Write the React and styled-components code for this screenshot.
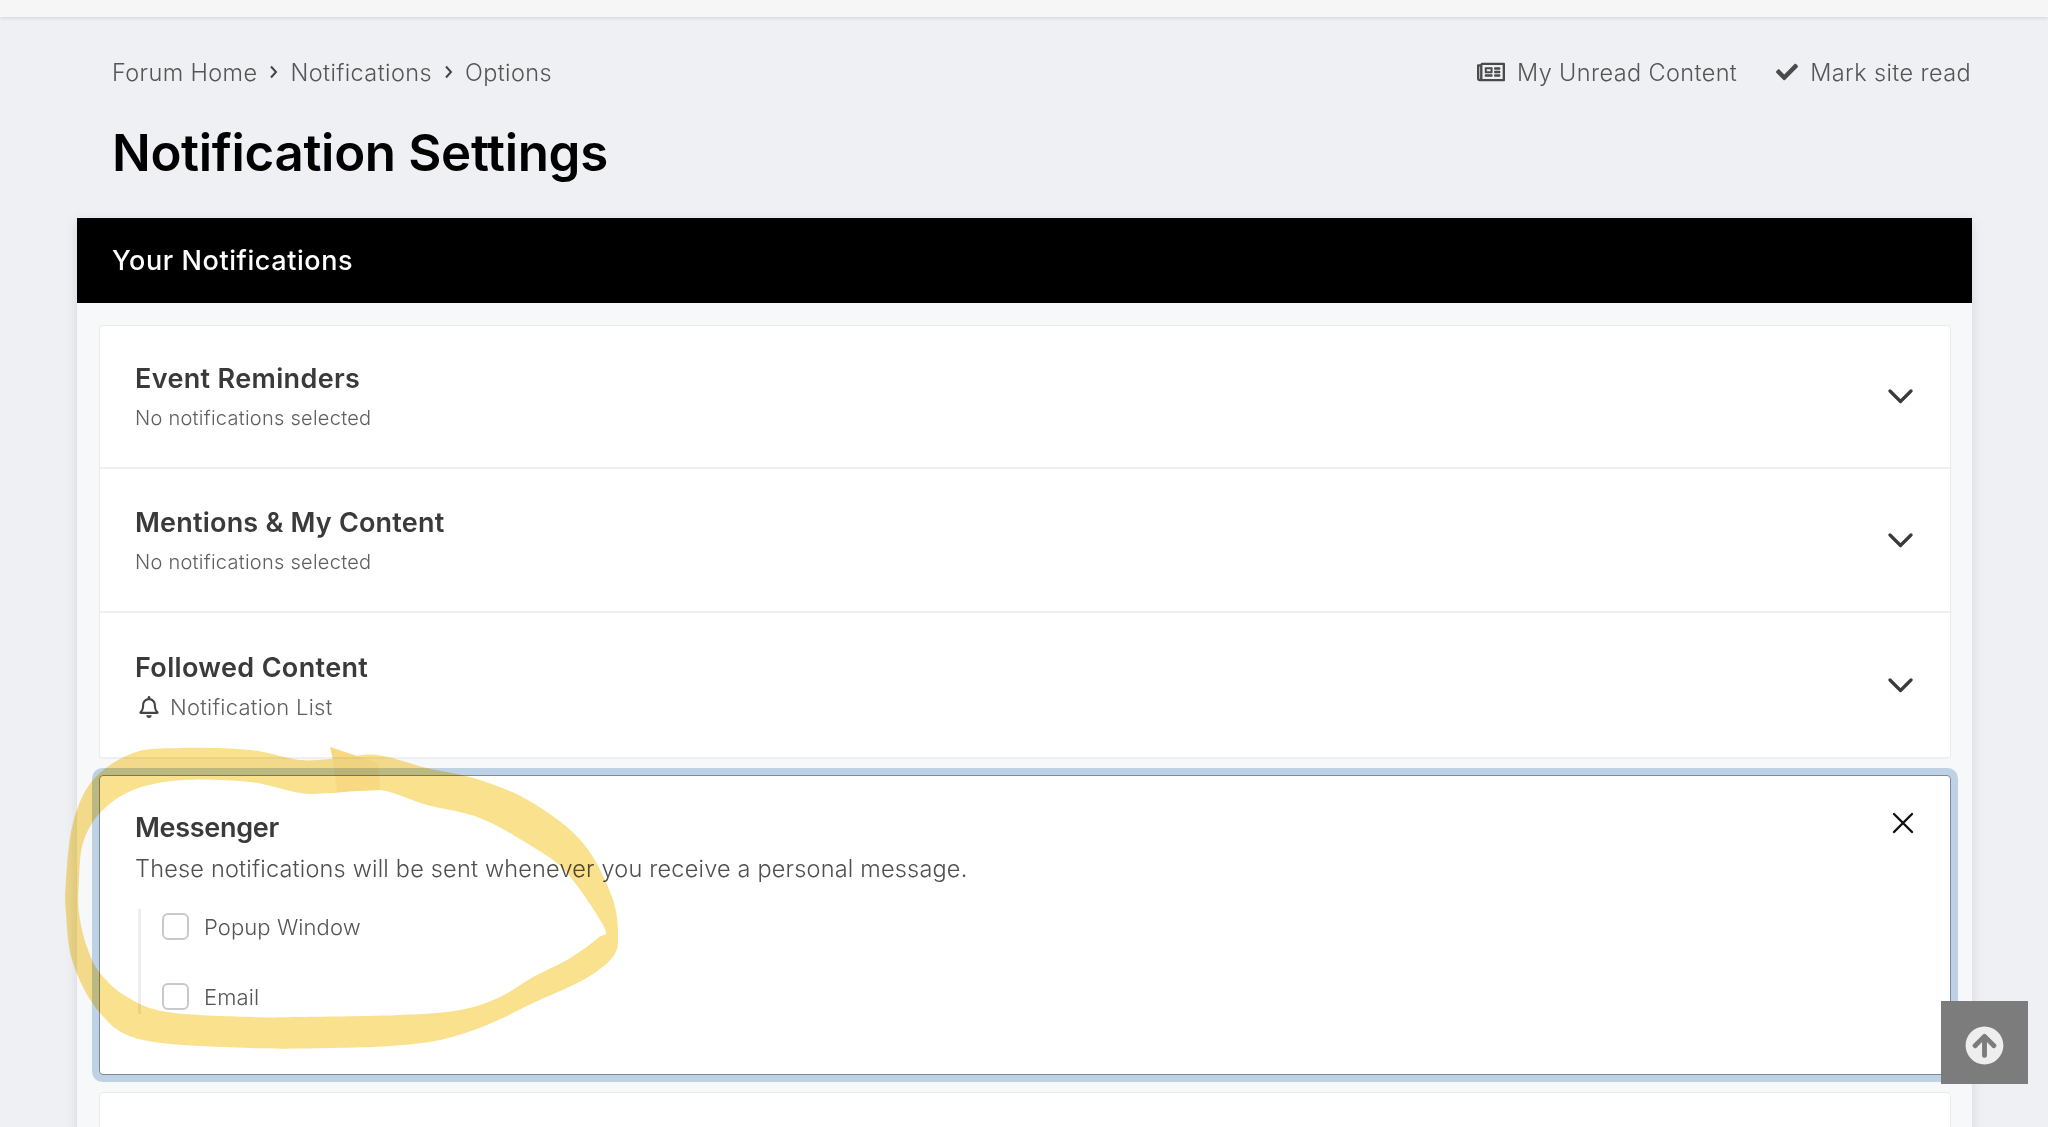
import React from "react";
import styled, { createGlobalStyle } from "styled-components";
import { FaRegNewspaper, FaCheck, FaRegBell, FaArrowCircleUp } from "react-icons/fa";

const Global = createGlobalStyle`
  html, body { margin: 0; padding: 0; background: #eff0f4; }
  #root { height: 1127px; overflow: hidden; position: relative; }
  * { box-sizing: border-box; }
  body { font-family: Inter, "Open Sans", sans-serif; color: #4a4a4a; }
`;

const Page = styled.div`
  height: 1127px;
  overflow: hidden;
  background: #eff0f4;
`;
const TopBar = styled.div`
  height: 17px;
  background: #f6f6f6;
  box-shadow: 0 1px 4px rgba(0, 0, 0, 0.12);
`;
const Crumbs = styled.div`
  display: flex;
  justify-content: space-between;
  align-items: center;
  height: 30px;
  margin-top: 40px;
  padding: 0 77px 0 112px;
  font-size: 23.5px;
  font-weight: 300;
  letter-spacing: 0.38px;
  color: #555;
`;
const Trail = styled.nav`
  display: flex;
  align-items: center;
  gap: 12px;
`;
const Sep = styled.svg`
  width: 9px;
  height: 14px;
  fill: none;
  stroke: #444;
  stroke-width: 2;
`;
const Actions = styled.div`
  display: flex;
  align-items: center;
  gap: 39px;
`;
const Action = styled.span`
  display: flex;
  align-items: center;
  gap: 12px;
  svg { font-size: ${(p) => p.$icon || 24}px; color: #4a4a4a; }
`;
const Title = styled.h1`
  margin: 36px 0 0 112px;
  font-size: 51px;
  line-height: 60px;
  font-weight: 600;
  color: #000;
  letter-spacing: -0.33px;
`;
const Panel = styled.section`
  margin: 35px 0 0 77px;
  width: 1895px;
  background: #f7f8fa;
  box-shadow: 0 3px 12px rgba(0, 0, 0, 0.1);
  padding-bottom: 40px;
`;
const PanelHead = styled.h2`
  margin: 0;
  height: 85px;
  padding-left: 35px;
  display: flex;
  align-items: center;
  background: #000;
  color: #fff;
  font-size: 27px;
  font-weight: 500;
  letter-spacing: 0.58px;
`;
const Cards = styled.div`
  padding: 22px 21px 0 22px;
`;
const Card = styled.article`
  display: flex;
  justify-content: space-between;
  align-items: center;
  height: ${(p) => p.$h}px;
  padding: 0 37px ${(p) => (p.$first ? 1 : 0)}px 35px;
  background: #fff;
  border: 1px solid #e9eaee;
  border-bottom: 2px solid #eeeff2;
  border-top-width: ${(p) => (p.$first ? 1 : 0)}px;
  border-radius: ${(p) => (p.$first ? "4px 4px 0 0" : p.$last ? "0 0 4px 4px" : "0")};
`;
const CardTitle = styled.h3`
  margin: 0;
  font-size: 27px;
  line-height: 36px;
  font-weight: 600;
  letter-spacing: ${(p) => p.$ls ?? 0.35}px;
  color: #3a3a3a;
`;
const CardSub = styled.div`
  display: flex;
  align-items: center;
  gap: 10px;
  margin-top: 7px;
  font-size: ${(p) => p.$size || 20}px;
  line-height: 28px;
  font-weight: 300;
  letter-spacing: 0.26px;
  color: #5f5f5f;
  svg { font-size: 22px; margin-left: 3px; color: #444; }
`;
const Chevron = styled.svg`
  width: 25px;
  height: 15px;
  fill: none;
  stroke: #3a3a3a;
  stroke-width: 3.2;
  stroke-linecap: round;
  stroke-linejoin: round;
`;
const Open = styled.article`
  display: flex;
  justify-content: space-between;
  align-items: flex-start;
  height: 300px;
  margin-top: 16px;
  padding: 34px 36px 0 35px;
  background: #fff;
  border: 1px solid #7b8a99;
  border-radius: 4px;
  box-shadow: 0 0 0 7px #bfd2e5;
`;
const Desc = styled.p`
  margin: 8px 0 0;
  font-size: 23.5px;
  line-height: 30px;
  font-weight: 300;
  letter-spacing: 0.19px;
  color: #4f4f4f;
`;
const Options = styled.ul`
  list-style: none;
  margin: 25px 0 0 3px;
  padding: 4px 0 4px 21px;
  display: flex;
  flex-direction: column;
  gap: 43px;
  border-left: 3px solid #eeeeee;
`;
const Option = styled.li`
  display: flex;
  align-items: center;
  gap: 15px;
  height: 27px;
  font-size: 22px;
  font-weight: 300;
  letter-spacing: 0.1px;
  color: #555;
`;
const Box = styled.span`
  width: 27px;
  height: 27px;
  border: 2px solid #c9c9c9;
  border-radius: 6px;
  background: #fff;
`;
const Close = styled.svg`
  width: 22px;
  height: 22px;
  margin-top: 2px;
  fill: none;
  stroke: #111;
  stroke-width: 2.4;
  stroke-linecap: round;
`;
const Next = styled.div`
  height: 200px;
  margin-top: 17px;
  background: #fff;
  border: 1px solid #e9eaee;
  border-radius: 4px;
`;
const TopButton = styled.button`
  position: absolute;
  left: 1941px;
  top: 1001px;
  width: 87px;
  height: 83px;
  border: 0;
  padding: 6px 0 0;
  background: #7c7c7c;
  color: #eeeeee;
  display: flex;
  align-items: center;
  justify-content: center;
  svg { font-size: 39px; }
`;
const Marker = styled.svg`
  position: absolute;
  left: 0;
  top: 0;
  width: 2048px;
  height: 1127px;
  pointer-events: none;
  mix-blend-mode: multiply;
  filter: blur(0.7px);
`;

const smooth = (pts) => {
  const n = pts.length;
  let d = `M${pts[0][0]} ${pts[0][1]}`;
  for (let i = 0; i < n; i++) {
    const p0 = pts[(i - 1 + n) % n], p1 = pts[i], p2 = pts[(i + 1) % n], p3 = pts[(i + 2) % n];
    d += `C${p1[0] + (p2[0] - p0[0]) / 6} ${p1[1] + (p2[1] - p0[1]) / 6} ${p2[0] - (p3[0] - p1[0]) / 6} ${p2[1] - (p3[1] - p1[1]) / 6} ${p2[0]} ${p2[1]}`;
  }
  return d + "Z";
};
const outer = [[66,913],[73,963],[100,1013],[143,1040],[250,1048],[330,1048],[390,1046],[440,1040],[487,1025],[533,1003],[583,980],[612,958],[618,937],[612,897],[583,843],[533,803],[480,780],[427,768],[377,755],[340,758],[300,760],[250,750],[180,748],[133,753],[93,780],[73,823],[66,880]];
const inner = [[79,913],[87,947],[100,973],[127,997],[167,1012],[250,1017],[300,1017],[400,1015],[460,1010],[500,997],[533,977],[567,960],[598,938],[604,927],[567,873],[533,847],[480,818],[427,805],[380,790],[333,793],[300,793],[250,782],[183,780],[133,790],[100,813],[83,843],[79,880]];

const Down = () => (
  <Chevron viewBox="0 0 25 15"><polyline points="2,2 12.5,12.5 23,2" /></Chevron>
);
const Arrow = () => (
  <Sep viewBox="0 0 9 14"><polyline points="2,1.5 7,7 2,12.5" /></Sep>
);

export default function App() {
  return (
    <Page>
      <Global />
      <TopBar />
      <Crumbs>
        <Trail>
          <span>Forum Home</span><Arrow />
          <span>Notifications</span><Arrow />
          <span>Options</span>
        </Trail>
        <Actions>
          <Action $icon={28}><FaRegNewspaper />My Unread Content</Action>
          <Action $icon={22}><FaCheck />Mark site read</Action>
        </Actions>
      </Crumbs>
      <Title>Notification Settings</Title>
      <Panel>
        <PanelHead>Your Notifications</PanelHead>
        <Cards>
          <Card $h={144} $first>
            <div><CardTitle>Event Reminders</CardTitle><CardSub>No notifications selected</CardSub></div>
            <Down />
          </Card>
          <Card $h={144}>
            <div><CardTitle $ls={0.2}>Mentions &amp; My Content</CardTitle><CardSub>No notifications selected</CardSub></div>
            <Down />
          </Card>
          <Card $h={146} $last>
            <div><CardTitle>Followed Content</CardTitle><CardSub $size={22}><FaRegBell />Notification List</CardSub></div>
            <Down />
          </Card>
          <Open>
            <div>
              <CardTitle $ls={-0.3}>Messenger</CardTitle>
              <Desc>These notifications will be sent whenever you receive a personal message.</Desc>
              <Options>
                <Option><Box />Popup Window</Option>
                <Option><Box />Email</Option>
              </Options>
            </div>
            <Close viewBox="0 0 22 22"><path d="M2 2L20 20M20 2L2 20" /></Close>
          </Open>
          <Next />
        </Cards>
      </Panel>
      <TopButton aria-label="Back to top"><FaArrowCircleUp /></TopButton>
      <Marker viewBox="0 0 2048 1127">
        <path fillRule="evenodd" fill="#fae18d" d={smooth(outer) + smooth(inner)} />
        <path fill="#f8d981" d="M330 747L378 763L380 790L337 792L333 760Z" />
      </Marker>
    </Page>
  );
}
